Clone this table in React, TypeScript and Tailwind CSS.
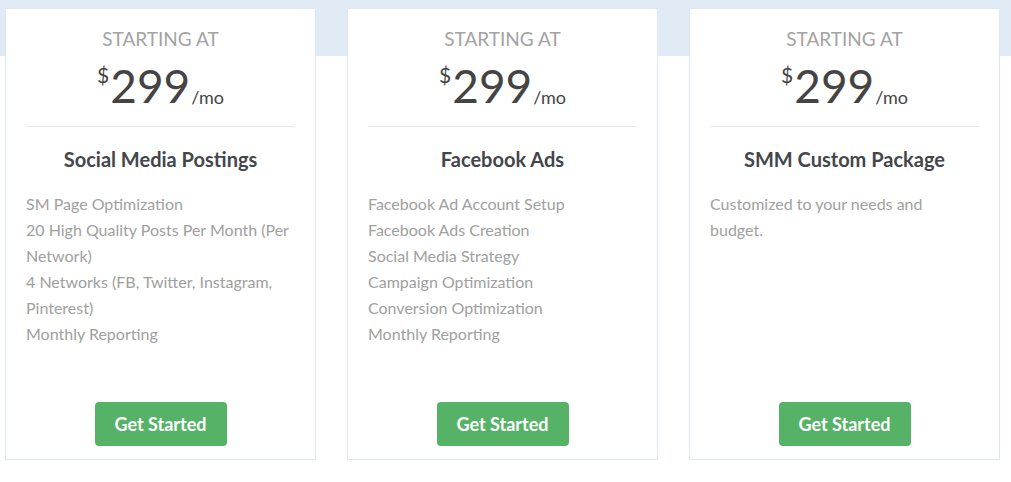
import React from 'react';

type Plan = {
  title: string;
  features: string[];
};

const PLANS: Plan[] = [
  {
    title: 'Social Media Postings',
    features: [
      'SM Page Optimization',
      '20 High Quality Posts Per Month (Per Network)',
      '4 Networks (FB, Twitter, Instagram, Pinterest)',
      'Monthly Reporting',
    ],
  },
  {
    title: 'Facebook Ads',
    features: [
      'Facebook Ad Account Setup',
      'Facebook Ads Creation',
      'Social Media Strategy',
      'Campaign Optimization',
      'Conversion Optimization',
      'Monthly Reporting',
    ],
  },
  {
    title: 'SMM Custom Package',
    features: ['Customized to your needs and budget.'],
  },
];

const PlanCard: React.FC<{ plan: Plan }> = ({ plan }) => {
  return (
    <div className="flex h-[452px] w-[311px] flex-col border border-[#dfe8f2] bg-white px-[20px]">
      <p className="mt-[18px] text-center text-[19px] leading-[24px] text-[#a3a3a3]">
        STARTING AT
      </p>

      <div className="mt-[9px] flex items-baseline justify-center text-[#444444]">
        <span className="relative -top-[20px] mr-[1px] text-[21px] leading-none">$</span>
        <span className="text-[46px] leading-[52px]">299</span>
        <span className="relative top-[1px] ml-[1px] text-[18px] leading-none">/mo</span>
      </div>

      <hr className="mt-[14px] border-t border-[#e8e8e8]" />

      <h3 className="mt-[20px] text-center text-[20px] font-bold leading-[24px] text-[#43464b]">
        {plan.title}
      </h3>

      <ul className="mt-[20px] text-[16px] leading-[26px] text-[#a0a0a0]">
        {plan.features.map((feature) => (
          <li key={feature}>{feature}</li>
        ))}
      </ul>

      <div className="mt-auto mb-[13px] flex justify-center">
        <button
          type="button"
          className="h-[44px] w-[132px] rounded-[4px] bg-[#55b267] text-[18px] font-bold text-white"
        >
          Get Started
        </button>
      </div>
    </div>
  );
};

export default function App() {
  return (
    <div
      className="min-h-[482px] bg-[linear-gradient(to_bottom,#e1ebf5_56px,#ffffff_56px)] pt-[8px] pl-[5px]"
      style={{ fontFamily: 'Lato, "Noto Sans", sans-serif' }}
    >
      <div className="flex gap-[31px]">
        {PLANS.map((plan) => (
          <PlanCard key={plan.title} plan={plan} />
        ))}
      </div>
    </div>
  );
}
